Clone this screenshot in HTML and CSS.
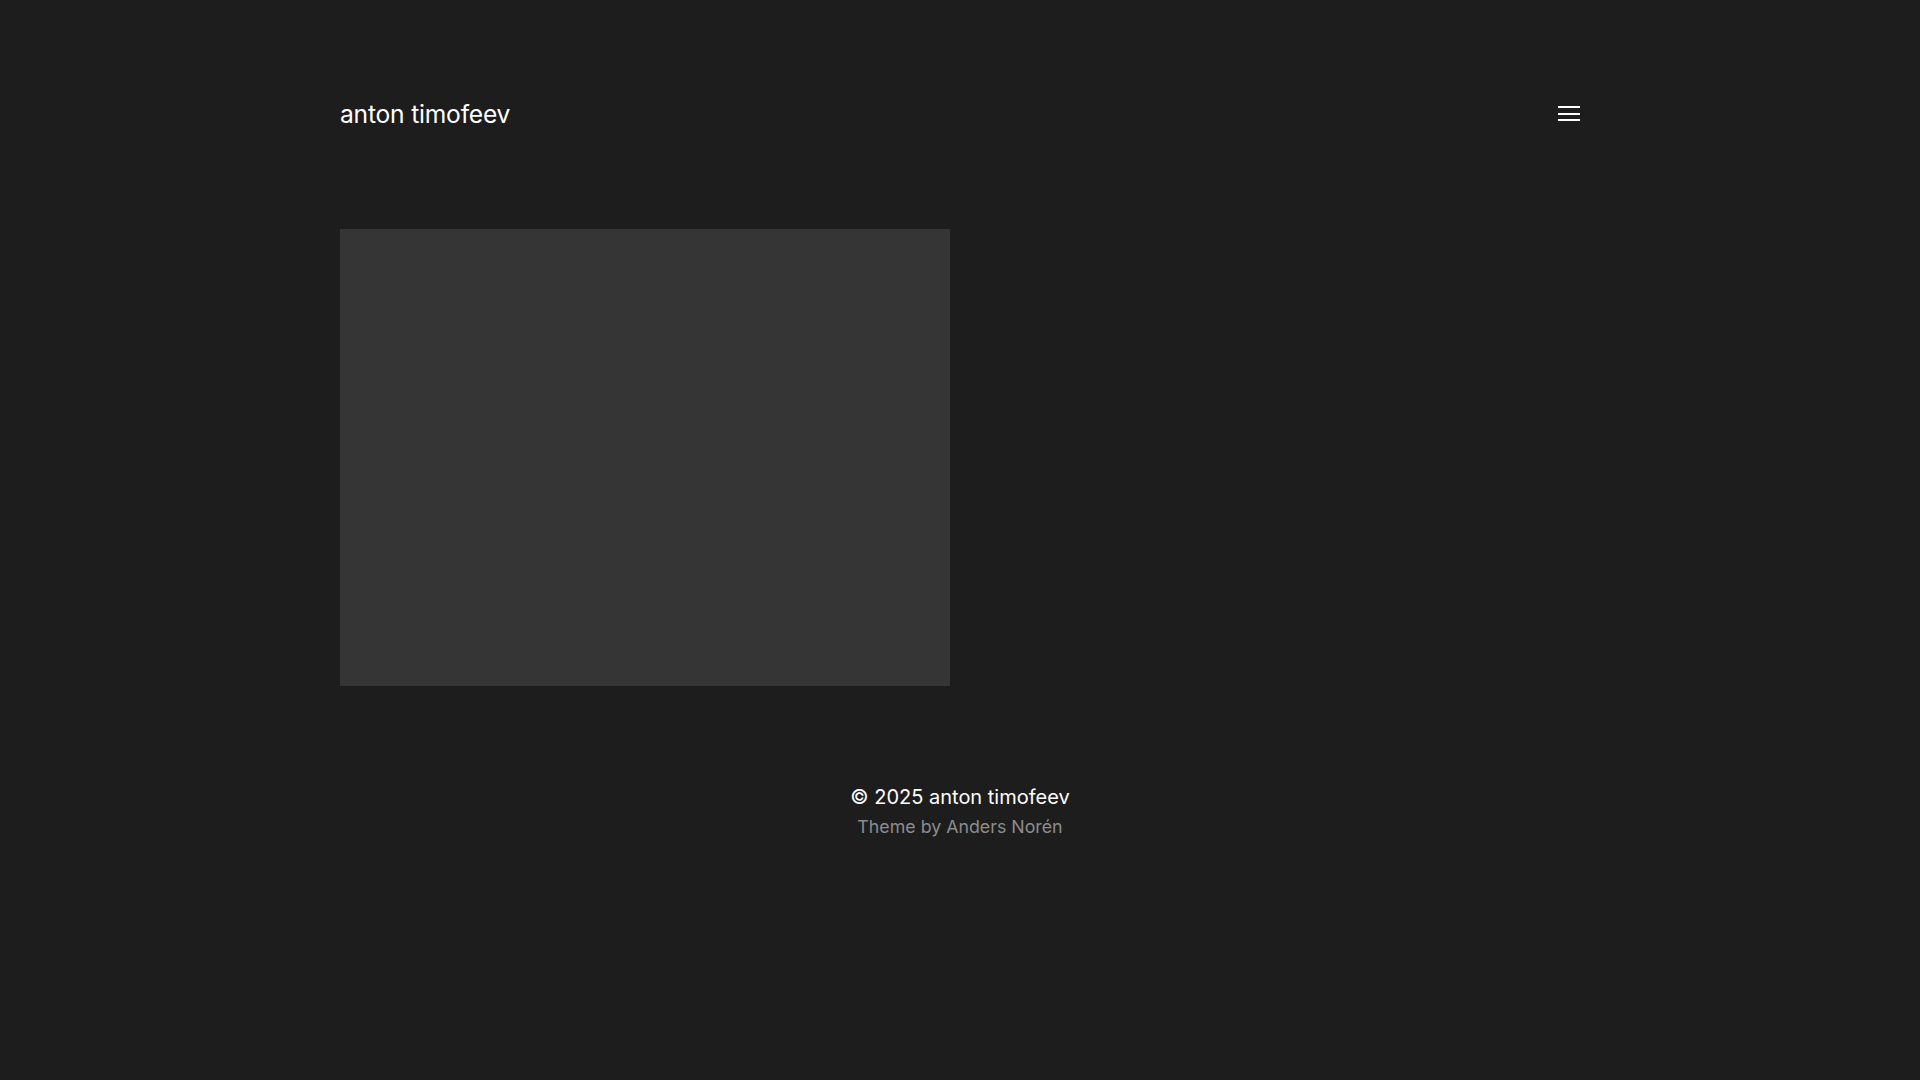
FILE: index.html
```html
<!DOCTYPE html>
<html lang="en">
<head>
<meta charset="utf-8">
<title>anton timofeev</title>
<link rel="stylesheet" href="styles.css">
</head>
<body>
<div class="page">
  <header class="site-header">
    <a class="site-title" href="#">anton timofeev</a>
    <button class="nav-toggle" aria-label="Menu">
      <span class="bar"></span>
      <span class="bar"></span>
      <span class="bar"></span>
    </button>
  </header>
  <main class="posts">
    <div class="post-preview"></div>
  </main>
  <footer class="site-footer">
    <p class="copyright">© 2025 <a href="#">anton timofeev</a></p>
    <p class="credit">Theme by <a href="#">Anders Norén</a></p>
  </footer>
</div>
</body>
</html>
```

FILE: styles.css
```css
html, body {
  margin: 0;
  padding: 0;
  background: #1d1d1d;
}
body {
  font-family: "Inter", "Liberation Sans", sans-serif;
  color: #ffffff;
}
a {
  color: inherit;
  text-decoration: none;
}
.page {
  width: 1240px;
  margin: 0 auto;
}
.site-header {
  height: 226px;
  display: flex;
  align-items: flex-start;
  justify-content: space-between;
}
.site-title {
  margin-top: 98px;
  font-size: 24.6px;
  line-height: 32px;
  letter-spacing: -0.2px;
}
.nav-toggle {
  margin-top: 106px;
  width: 22px;
  height: 15px;
  padding: 0;
  border: 0;
  background: none;
  display: flex;
  flex-direction: column;
  justify-content: space-between;
}
.bar {
  display: block;
  width: 22px;
  height: 2px;
  background: #ffffff;
}
.posts {
  padding-top: 3px;
}
.post-preview {
  width: 610px;
  height: 457px;
  background: #353535;
}
.site-footer {
  padding-top: 96px;
  text-align: center;
}
.copyright {
  margin: 0;
  font-size: 20px;
  line-height: 30px;
  color: #ffffff;
}
.credit {
  margin: 0;
  font-size: 17.8px;
  line-height: 30px;
  color: #8c8c8c;
}
```
